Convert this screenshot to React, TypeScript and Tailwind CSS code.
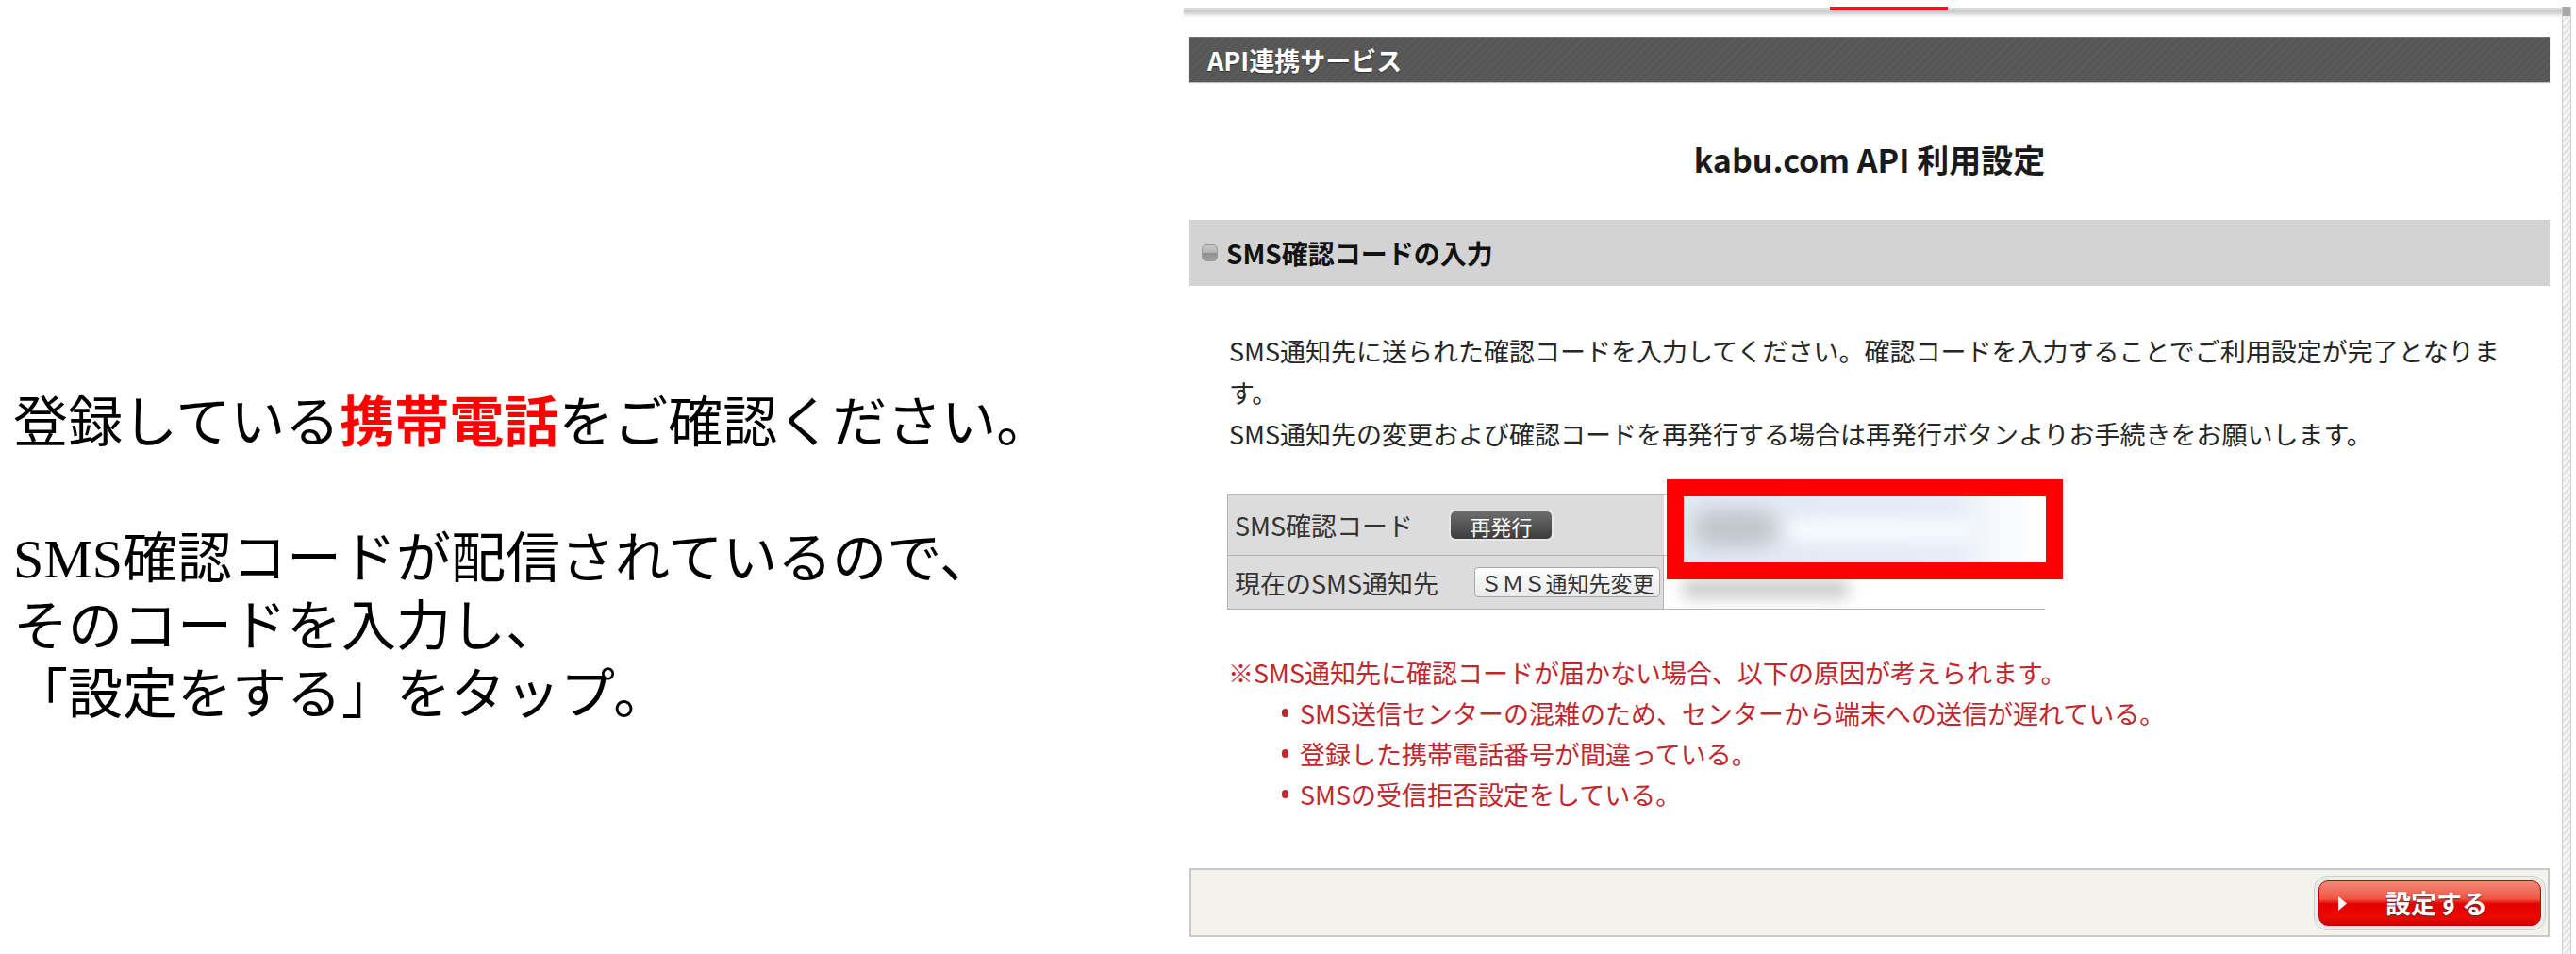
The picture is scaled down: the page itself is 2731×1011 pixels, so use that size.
import React from "react";

const SANS = "font-['Noto_Sans_CJK_JP','Noto_Sans',sans-serif]";

export default function App() {
  return (
    <div className="w-[2731px] h-[1011px] bg-white flex overflow-hidden">
      {/* Left explanatory text */}
      <div className="w-[1255px] shrink-0 pl-[14px] pt-[407px] font-['Liberation_Serif','Noto_Sans_CJK_JP',serif] text-[58px] leading-[72px] text-black whitespace-nowrap">
        <div>
          登録している
          <span className="font-['Noto_Sans_CJK_JP',sans-serif] font-bold text-[#ff0000]">携帯電話</span>
          をご確認ください。
        </div>
        <div className="h-[72px]" />
        <div>SMS確認コードが配信されているので、</div>
        <div>そのコードを入力し、</div>
        <div>「設定をする」をタップ。</div>
      </div>

      {/* Right screenshot panel */}
      <div className={`flex ${SANS}`}>
        <div className="w-[1461px] shrink-0">
          {/* top rule */}
          <div className="relative mt-[9px] h-[6px] bg-[linear-gradient(#e2e2e2,#cbcbcb,#dedede)] shadow-[0_2px_3px_rgba(0,0,0,0.1)]">
            <div className="absolute left-[685px] top-[-2px] w-[125px] h-[4px] bg-[#e8141c]" />
          </div>

          <div className="ml-[6px] w-[1442px]">
            {/* dark header */}
            <div className="mt-[24px] h-[48px] flex items-center pl-[19px] border-t border-[#747474] bg-[#585858] bg-[image:repeating-linear-gradient(135deg,#5a5a5a_0px,#5a5a5a_3px,#565656_3px,#565656_6px)] shadow-[0_1px_1px_rgba(0,0,0,0.25)]">
              <span className="text-white font-bold text-[27px] leading-none [text-shadow:0_1px_1px_rgba(0,0,0,0.5)]">
                API連携サービス
              </span>
            </div>

            {/* title */}
            <div className="mt-[58px] h-[48px] leading-[48px] text-center text-[34px] font-bold text-[#1a1a1a]">
              kabu.com API 利用設定
            </div>

            {/* section header */}
            <div className="mt-[40px] h-[70px] bg-[#d3d3d3] flex items-center pl-[13px]">
              <span className="w-[17px] h-[18px] rounded-[5px] bg-[linear-gradient(#c8c8c8,#b4b4b4_50%,#8e8e8e_50%,#a0a0a0)] border border-[#9a9a9a]" />
              <span className="ml-[9px] text-[28px] font-bold text-[#111] leading-none">
                SMS確認コードの入力
              </span>
            </div>

            {/* paragraph */}
            <div className="mt-[47px] pl-[42px] text-[27px] leading-[44px] text-[#262626] whitespace-nowrap">
              <div>SMS通知先に送られた確認コードを入力してください。確認コードを入力することでご利用設定が完了となりま</div>
              <div>す。</div>
              <div>SMS通知先の変更および確認コードを再発行する場合は再発行ボタンよりお手続きをお願いします。</div>
            </div>

            {/* table */}
            <div className="relative mt-[42px] ml-[40px] w-[867px]">
              <div className="grid grid-cols-[462px_405px] border border-[#b4b4b4] text-[27px] text-[#333]">
                <div className="h-[64px] bg-[#dcdcdc] flex items-center pl-[7px] border-b border-[#b4b4b4]">
                  <span className="w-[229px] leading-none">SMS確認コード</span>
                  <span className="w-[107px] h-[29px] rounded-[5px] bg-[linear-gradient(#6e6e6e,#3c3c3c)] shadow-[0_0_0_2px_#e6e6e6] flex items-center justify-center text-white text-[22px] leading-none">
                    再発行
                  </span>
                </div>
                <div className="h-[64px] bg-white border-b border-[#b4b4b4]" />
                <div className="h-[56px] bg-[#dcdcdc] flex items-center pl-[7px] border-r border-[#b4b4b4]">
                  <span className="w-[254px] leading-none">現在のSMS通知先</span>
                  <span className="w-[197px] h-[32px] rounded-[4px] border border-[#a8a8a8] bg-[linear-gradient(#ffffff,#e9e9e9)] flex items-center justify-center text-[23px] text-[#333] leading-none">
                    ＳＭＳ通知先変更
                  </span>
                </div>
                <div className="relative h-[56px] bg-white overflow-hidden">
                  <div className="absolute left-[18px] top-[24px] w-[180px] h-[22px] rounded-full bg-[#cfcfcf] blur-[8px]" />
                </div>
              </div>

              {/* red highlight over code input */}
              <div className="absolute left-[466px] top-[-16px] w-[420px] h-[106px] border-[18px] border-[#ff0000] bg-white overflow-hidden">
                <div className="absolute inset-0 bg-[linear-gradient(90deg,#e2e9f3_0%,#e6edf7_75%,#f6f8fb_85%,#ffffff_100%)]" />
                <div className="absolute left-[10px] top-[14px] w-[90px] h-[40px] rounded-full bg-[#c2c6cc] blur-[10px]" />
                <div className="absolute left-[110px] top-[24px] w-[200px] h-[24px] rounded-full bg-[#f7fafe] blur-[8px]" />
              </div>
            </div>

            {/* red notes */}
            <div className="mt-[45px] pl-[41px] text-[27px] leading-[43px] text-[#c1272d] whitespace-nowrap">
              <div>※SMS通知先に確認コードが届かない場合、以下の原因が考えられます。</div>
              {[
                "SMS送信センターの混雑のため、センターから端末への送信が遅れている。",
                "登録した携帯電話番号が間違っている。",
                "SMSの受信拒否設定をしている。",
              ].map((t) => (
                <div key={t} className="flex items-center pl-[57px]">
                  <span className="w-[19px] flex items-center">
                    <span className="w-[7px] h-[9px] rounded-full bg-[#c1272d]" />
                  </span>
                  <span>{t}</span>
                </div>
              ))}
            </div>

            {/* footer bar */}
            <div className="mt-[57px] h-[73px] border-2 border-[#c9c9c9] bg-[#f4f2ec] flex items-center justify-end pr-[2px]">
              <div className="w-[246px] h-[58px] rounded-[14px] border border-[#cfcfcf] bg-[#ececec] p-[4px]">
                <div className="relative w-full h-full rounded-[10px] border border-[#c40000] bg-[linear-gradient(to_bottom,#f58a78_0%,#ef5545_40%,#e60000_52%,#ea0a00_85%,#cc0000_100%)] flex items-center">
                  <svg className="absolute left-[20px] top-[16px]" width="9" height="15" viewBox="0 0 9 15">
                    <path d="M0 0 L9 7.5 L0 15 Z" fill="#ffffff" />
                  </svg>
                  <span className="ml-[70px] text-white font-bold text-[27px] leading-none [text-shadow:0_1px_2px_#3a3a3a]">
                    設定する
                  </span>
                </div>
              </div>
            </div>
          </div>
        </div>

        {/* right hatched bar */}
        <div className="mt-[7px] w-[10px] h-[1004px] border-x border-[#d0d0d0] bg-[#ececec] bg-[image:repeating-linear-gradient(135deg,#e2e2e2_0px,#e2e2e2_2px,#f5f5f5_2px,#f5f5f5_5px)]">
          <div className="h-[10px] bg-[#a8a8a8]" />
        </div>
      </div>
    </div>
  );
}
